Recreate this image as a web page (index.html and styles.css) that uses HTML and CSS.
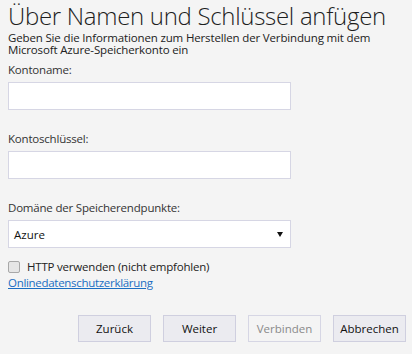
FILE: index.html
```html
<!DOCTYPE html>
<html lang="de">
<head>
<meta charset="utf-8">
<link rel="stylesheet" href="styles.css">
</head>
<body>
<div class="dialog">
  <h1 class="title">Über Namen und Schlüssel anfügen</h1>
  <p class="intro">Geben Sie die Informationen zum Herstellen der Verbindung mit dem Microsoft Azure-Speicherkonto ein</p>
  <label class="label first">Kontoname:</label>
  <div class="input"></div>
  <label class="label">Kontoschlüssel:</label>
  <div class="input"></div>
  <label class="label">Domäne der Speicherendpunkte:</label>
  <div class="input select"><span>Azure</span><span class="arrow"></span></div>
  <div class="check"><span class="box"></span><span>HTTP verwenden (nicht empfohlen)</span></div>
  <a class="link" href="#">Onlinedatenschutzerklärung</a>
  <div class="buttons">
    <button class="btn">Zurück</button>
    <button class="btn">Weiter</button>
    <button class="btn disabled">Verbinden</button>
    <button class="btn">Abbrechen</button>
  </div>
</div>
</body>
</html>
```
FILE: styles.css
```css
html, body {
  margin: 0;
  padding: 0;
  background: #f4f4f4;
}
body {
  font-family: "Open Sans", "Noto Sans", sans-serif;
  color: #222;
  width: 412px;
  height: 354px;
  overflow: hidden;
}
.dialog {
  padding: 2px 6px 0 8px;
  display: flex;
  flex-direction: column;
}
.title {
  margin: 0;
  font-weight: 300;
  font-size: 24px;
  line-height: 28px;
  letter-spacing: -0.3px;
  color: #1e1e1e;
  white-space: nowrap;
}
.intro {
  margin: 2px 0 0;
  font-size: 11.5px;
  line-height: 12px;
  letter-spacing: -0.15px;
  color: #222;
}
.label {
  display: block;
  font-size: 11.5px;
  line-height: 14px;
  letter-spacing: -0.2px;
  color: #333;
  margin-top: 22px;
  margin-bottom: 5px;
}
.label.first {
  margin-top: 7px;
}
.input {
  width: 281px;
  height: 26px;
  background: #fff;
  border: 1px solid #d6d6e4;
}
.select {
  display: flex;
  align-items: center;
  justify-content: space-between;
  font-size: 11.5px;
  padding: 0 7px 0 5px;
  width: 269px;
  color: #111;
}
.arrow {
  width: 0;
  height: 0;
  margin-top: 1px;
  border-left: 3px solid transparent;
  border-right: 3px solid transparent;
  border-top: 5px solid #111;
}
.check {
  display: flex;
  align-items: center;
  gap: 7px;
  margin-top: 12px;
  font-size: 11.5px;
  line-height: 14px;
  letter-spacing: -0.2px;
  color: #222;
}
.box {
  width: 10px;
  height: 10px;
  border: 1px solid #a8a8a8;
  border-radius: 2px;
  background: #e6e6e6;
}
.link {
  font-size: 11.5px;
  line-height: 14px;
  color: #1b6ec2;
  text-decoration: underline;
  letter-spacing: -0.3px;
  margin-top: 2px;
  align-self: flex-start;
}
.buttons {
  display: flex;
  justify-content: flex-end;
  gap: 12px;
  margin-top: 25px;
}
.btn {
  width: 73px;
  height: 27px;
  background: #ebebf0;
  border: 1px solid #cfcfdf;
  font-family: "Open Sans", "Noto Sans", sans-serif;
  font-size: 11.5px;
  color: #111;
  padding: 0;
}
.btn.disabled {
  background: #f4f4f4;
  color: #8a8a8a;
  border-color: #d6d6e4;
}
```
